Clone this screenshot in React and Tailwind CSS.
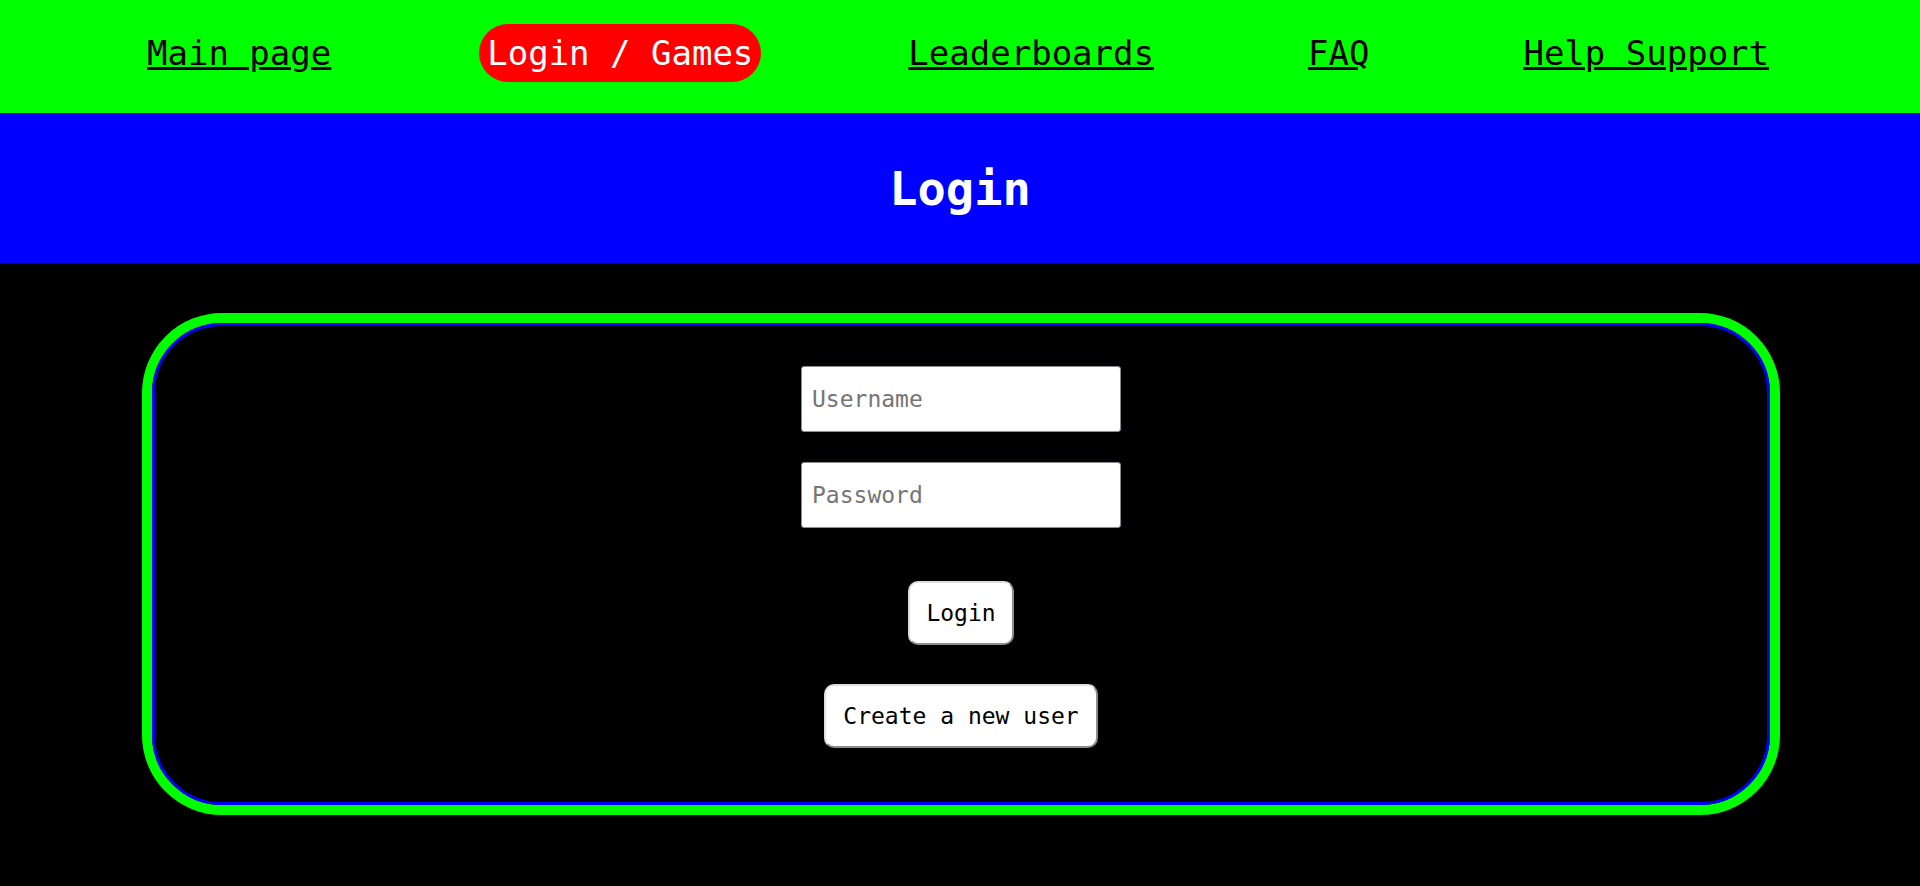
export default function App() {
  const mono = "font-['DejaVu_Sans_Mono',monospace]";
  return (
    <div className={`min-h-[886px] bg-black ${mono}`}>
      <nav className="h-[113px] bg-[#00ff00] flex items-center pl-[147px] pb-[7px]">
        <a href="#" className="text-[34px] leading-[40px] text-black underline">Main page</a>
        <a href="#" className="ml-[148px] text-[34px] leading-[40px] text-white bg-[#ff0000] rounded-[29px] h-[58px] px-[8px] flex items-center">Login / Games</a>
        <a href="#" className="ml-[147px] text-[34px] leading-[40px] text-black underline">Leaderboards</a>
        <a href="#" className="ml-[154px] text-[34px] leading-[40px] text-black underline">FAQ</a>
        <a href="#" className="ml-[154px] text-[34px] leading-[40px] text-black underline">Help Support</a>
      </nav>
      <header className="h-[150px] bg-[#0000ff] flex items-center justify-center">
        <h1 className="text-[47px] font-bold text-white leading-[55px]">Login</h1>
      </header>
      <main className="pt-[50px]">
        <div className="ml-[142px] mr-[140px] border-[10px] border-[#00ff00] rounded-[80px]">
          <div className="border-[3px] border-[#0000ff] rounded-[70px] pt-[40px] pb-[54px] flex flex-col items-center">
            <input
              type="text"
              placeholder="Username"
              className={`w-[320px] h-[66px] bg-white border border-[#8a8a96] rounded-[3px] px-[10px] text-[23px] text-black placeholder:text-[#757575] outline-none ${mono}`}
            />
            <input
              type="password"
              placeholder="Password"
              className={`mt-[30px] w-[320px] h-[66px] bg-white border border-[#8a8a96] rounded-[3px] px-[10px] text-[23px] text-black placeholder:text-[#757575] outline-none ${mono}`}
            />
            <button className={`mt-[53px] h-[64px] px-[16px] bg-white text-black text-[23px] rounded-[10px] border-2 border-t-[#dedede] border-l-[#dedede] border-b-[#8c8c8c] border-r-[#8c8c8c] ${mono}`}>
              Login
            </button>
            <button className={`mt-[39px] h-[64px] px-[17px] bg-white text-black text-[23px] rounded-[10px] border-2 border-t-[#dedede] border-l-[#dedede] border-b-[#8c8c8c] border-r-[#8c8c8c] ${mono}`}>
              Create a new user
            </button>
          </div>
        </div>
      </main>
    </div>
  );
}
